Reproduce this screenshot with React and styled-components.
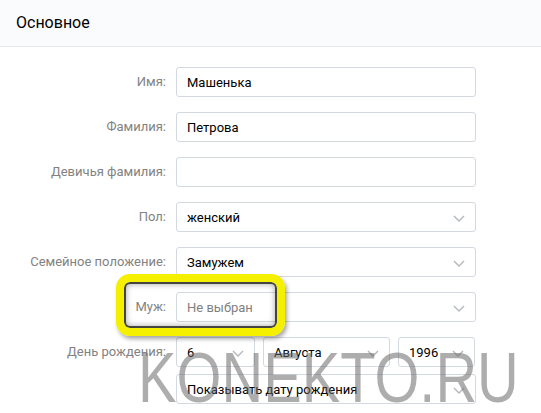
import React from 'react'
import styled, { createGlobalStyle } from 'styled-components'

const GlobalStyle = createGlobalStyle`
  body {
    margin: 0;
    background: #ffffff;
    font-family: Roboto, "Open Sans", Arial, sans-serif;
  }
`

const fields = [
  { label: 'Имя:', value: 'Машенька' },
  { label: 'Фамилия:', value: 'Петрова' },
  { label: 'Девичья фамилия:', value: '' },
  { label: 'Пол:', value: 'женский', select: true },
  { label: 'Семейное положение:', value: 'Замужем', select: true },
  { label: 'Муж:', value: 'Не выбран', select: true, placeholder: true },
]

function Chevron() {
  return (
    <svg width="12" height="7" viewBox="0 0 12 7">
      <path d="M1 1l5 5 5-5" fill="none" stroke="#b3b8bd" strokeWidth="1.4" />
    </svg>
  )
}

function Select({ value, placeholder, width }) {
  return (
    <Field $width={width} $placeholder={placeholder}>
      <span>{value}</span>
      <Arrow><Chevron /></Arrow>
    </Field>
  )
}

export default function App() {
  return (
    <Page>
      <GlobalStyle />
      <Header>Основное</Header>
      <Form>
        {fields.map((f) => (
          <Row key={f.label}>
            <Label>{f.label}</Label>
            {f.select
              ? <Select value={f.value} placeholder={f.placeholder} />
              : <Field><span>{f.value}</span></Field>}
          </Row>
        ))}
        <Row $tall>
          <Label>День рождения:</Label>
          <Stack>
            <DateLine>
              <Select value="6" width={79} />
              <Select value="Августа" width={127} />
              <Select value="1996" width={77} />
            </DateLine>
            <Select value="Показывать дату рождения" />
          </Stack>
        </Row>
      </Form>
      <Highlight />
      <Watermark>KONEKTO.RU</Watermark>
    </Page>
  )
}

const Page = styled.div`
  position: relative;
  width: 541px;
  height: 413px;
  overflow: hidden;
  background: #ffffff;
`

const Header = styled.div`
  height: 47px;
  display: flex;
  align-items: center;
  padding: 0 16px 2px;
  box-sizing: border-box;
  background: #fafbfc;
  border-bottom: 1px solid #e7e8ec;
  font-size: 16px;
  color: #000;
`

const Form = styled.div`
  display: flex;
  flex-direction: column;
  gap: 15px;
  padding-top: 20px;
`

const Row = styled.div`
  display: grid;
  grid-template-columns: 166px 300px;
  column-gap: 10px;
  align-items: ${(p) => (p.$tall ? 'start' : 'center')};
  min-height: 30px;
`

const Label = styled.div`
  text-align: right;
  font-size: 13px;
  line-height: 30px;
  color: #828282;
  white-space: nowrap;
`

const Field = styled.div`
  position: relative;
  box-sizing: border-box;
  width: ${(p) => (p.$width ? `${p.$width}px` : '100%')};
  height: 30px;
  display: flex;
  align-items: center;
  padding: 0 30px 0 10px;
  border: 1px solid #d3d9de;
  border-radius: 3px;
  background: #fff;
  font-size: 13px;
  color: ${(p) => (p.$placeholder ? '#7f7f7f' : '#000')};
  white-space: nowrap;
  overflow: hidden;
`

const Arrow = styled.span`
  position: absolute;
  right: 10px;
  top: 50%;
  height: 7px;
  margin-top: -2px;
  display: flex;
`

const Stack = styled.div`
  display: flex;
  flex-direction: column;
  gap: 7px;
`

const DateLine = styled.div`
  display: flex;
  gap: 8px;
`

const Highlight = styled.div`
  position: absolute;
  left: 116px;
  top: 274px;
  width: 169px;
  height: 62px;
  box-sizing: border-box;
  border: 8px solid #f4f000;
  border-radius: 14px;
  box-shadow:
    inset 0 0 0 2px rgba(45, 45, 40, 0.85),
    inset 0 0 6px 2px rgba(0, 0, 0, 0.35),
    2px 3px 4px rgba(0, 0, 0, 0.35);
`

const Watermark = styled.div`
  position: absolute;
  left: 138px;
  top: 343px;
  font-family: "Liberation Sans", Arial, sans-serif;
  font-size: 70px;
  line-height: 70px;
  color: rgba(105, 105, 105, 0.55);
  transform: scaleX(0.825);
  transform-origin: left top;
  white-space: nowrap;
  pointer-events: none;
`
